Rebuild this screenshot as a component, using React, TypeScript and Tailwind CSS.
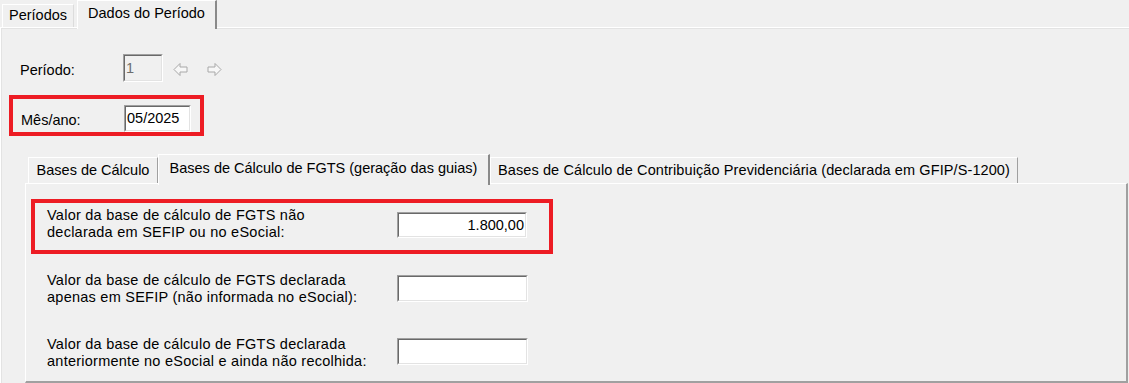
import type { ReactNode } from 'react';

const FONT = "font-['Liberation_Sans','Arial',sans-serif]";

function Edit({
  value,
  className,
  disabled,
  alignRight,
}: {
  value?: string;
  className: string;
  disabled?: boolean;
  alignRight?: boolean;
}) {
  return (
    <div
      className={`shrink-0 border-t border-l border-[#a0a0a0] border-b border-r border-b-white border-r-white ${className}`}
    >
      <div
        className={`flex h-full items-center border-t border-l border-[#696969] border-b border-r border-b-[#e3e3e3] border-r-[#e3e3e3] px-[1px] ${
          disabled ? 'bg-[#f0f0f0] text-[#6d6d6d]' : 'bg-white text-black'
        } ${alignRight ? 'justify-end' : 'justify-start'}`}
      >
        <span className="leading-[17px]">{value}</span>
      </div>
    </div>
  );
}

function Arrow({ dir }: { dir: 'left' | 'right' }) {
  return (
    <svg
      width="15"
      height="15"
      viewBox="0 0 15 15"
      className={dir === 'right' ? '-scale-x-100' : ''}
    >
      <path
        d="M1 7.5 L7 1.5 V5 H14 V10 H7 V13.5 Z"
        fill="#f7f7f7"
        stroke="#a8a8a8"
        strokeWidth="1"
        strokeLinejoin="miter"
      />
    </svg>
  );
}

function Tab({
  children,
  active,
  className,
}: {
  children: ReactNode;
  active?: boolean;
  className: string;
}) {
  return (
    <div
      className={`flex shrink-0 items-center justify-center whitespace-nowrap border-t border-l border-white ${
        active
          ? 'relative z-10 -mb-[2px] border-r-2 border-r-[#8a8a8a] bg-[#f0f0f0]'
          : 'border-r border-r-[#a0a0a0] bg-[#f0f0f0]'
      } ${className}`}
    >
      {children}
    </div>
  );
}

function FieldLabel({ lines, className }: { lines: string[]; className: string }) {
  return (
    <div className={`shrink-0 whitespace-nowrap leading-[17px] tracking-[0.25px] ${className}`}>
      {lines.map((l) => (
        <div key={l}>{l}</div>
      ))}
    </div>
  );
}

export default function App() {
  return (
    <div
      className={`${FONT} flex h-[383px] w-[1129px] flex-col overflow-hidden bg-[#f0f0f0] text-[14.5px] text-black`}
    >
      {/* outer tabs */}
      <div className="flex h-[27px] shrink-0 items-end pl-[2px]">
        <Tab className="h-[23px] w-[72px] border-r-[#dcdcdc] pb-[1px]">Períodos</Tab>
        <Tab active className="ml-[3px] h-[29px] w-[140px] pb-[3px]">
          Dados do Período
        </Tab>
      </div>

      <div className="flex-1 border-t border-l border-white shadow-[inset_1px_1px_0_#e3e3e3]">
        {/* Período */}
        <div className="mt-[26px] flex h-[28px] items-start pl-[19px]">
          <div className="mt-[8px] w-[103px] leading-[17px]">Período:</div>
          <Edit disabled value="1" className="h-[28px] w-[40px]" />
          <div className="ml-[10px] mt-[8px]">
            <Arrow dir="left" />
          </div>
          <div className="ml-[19px] mt-[8px]">
            <Arrow dir="right" />
          </div>
        </div>

        {/* Mês/ano */}
        <div className="ml-[8px] mt-[13px] h-[41px] w-[195px] border-4 border-[#ed1c24]">
          <div className="flex items-start pl-[8px]">
            <div className="mt-[13px] w-[103px] leading-[17px]">Mês/ano:</div>
            <Edit value="05/2025" className="mt-[6px] h-[27px] w-[67px]" />
          </div>
        </div>

        {/* inner tabs */}
        <div className="ml-[24px] mt-[18px]">
          <div className="flex h-[29px] items-end pl-[3px]">
            <Tab className="h-[26px] w-[130px]">Bases de Cálculo</Tab>
            <Tab active className="h-[31px] w-[332px] pb-[2px]">
              Bases de Cálculo de FGTS (geração das guias)
            </Tab>
            <Tab className="h-[26px] w-[528px] tracking-[0.1px]">
              Bases de Cálculo de Contribuição Previdenciária (declarada em GFIP/S-1200)
            </Tab>
          </div>

          <div className="h-[200px] w-[1103px] border-t border-l border-white border-r-2 border-b-2 border-r-[#a0a0a0] border-b-[#a0a0a0]">
            <div className="ml-[5px] mt-[15px] h-[55px] w-[522px] border-4 border-[#ed1c24]">
              <div className="flex items-start">
                <FieldLabel
                  className="mt-[4px] w-[362px] pl-[12px]"
                  lines={['Valor da base de cálculo de FGTS não', 'declarada em SEFIP ou no eSocial:']}
                />
                <Edit value="1.800,00" alignRight className="mt-[9px] h-[26px] w-[130px]" />
              </div>
            </div>

            <div className="mt-[18px] flex items-start pl-[21px]">
              <FieldLabel
                className="w-[350px]"
                lines={[
                  'Valor da base de cálculo de FGTS declarada',
                  'apenas em SEFIP (não informada no eSocial):',
                ]}
              />
              <Edit className="mt-[3px] h-[27px] w-[131px]" />
            </div>

            <div className="mt-[30px] flex items-start pl-[21px]">
              <FieldLabel
                className="w-[350px]"
                lines={[
                  'Valor da base de cálculo de FGTS declarada',
                  'anteriormente no eSocial e ainda não recolhida:',
                ]}
              />
              <Edit className="mt-[2px] h-[27px] w-[131px]" />
            </div>
          </div>
        </div>
      </div>
    </div>
  );
}
